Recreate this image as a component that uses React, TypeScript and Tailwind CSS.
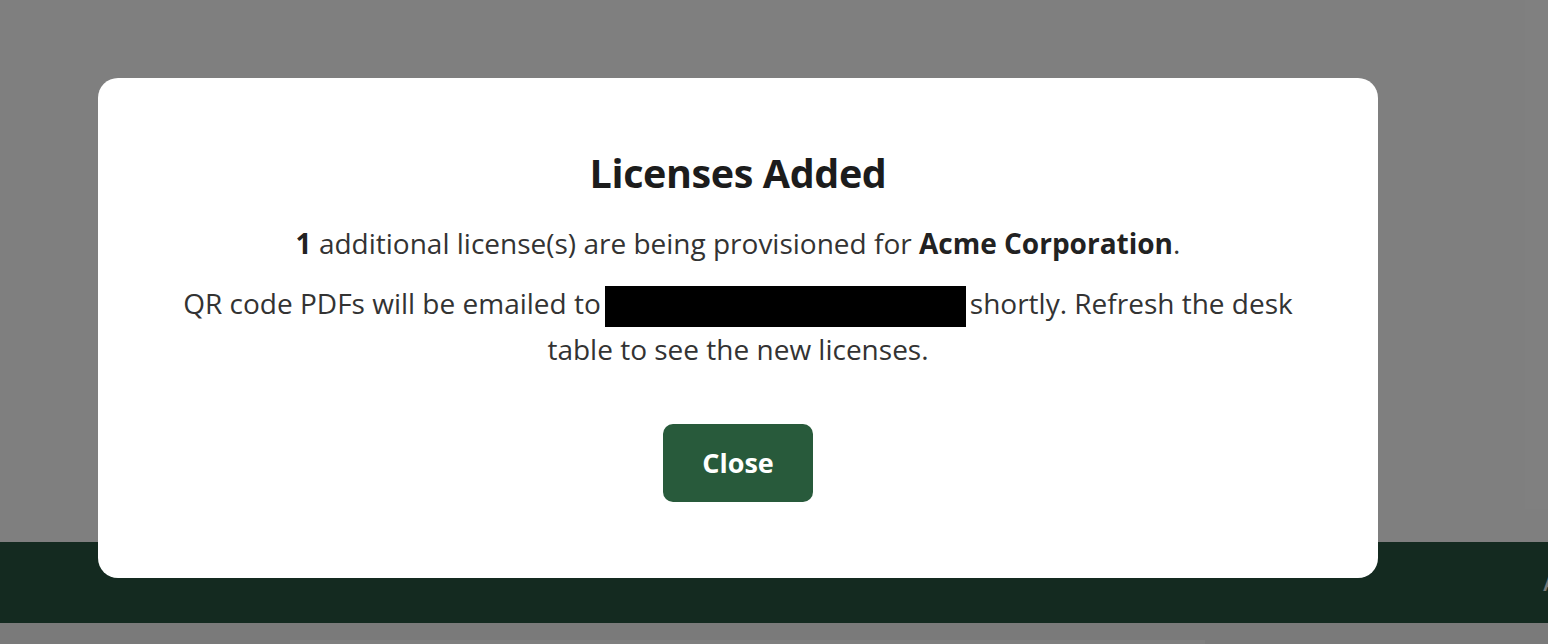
import React from "react";

export default function App() {
  return (
    <div
      className="relative w-full h-[644px] overflow-hidden"
      style={{ fontFamily: "'Open Sans', Lato, sans-serif" }}
    >
      {/* underlying page */}
      <div className="flex flex-col h-full">
        <div className="h-[542px] shrink-0 bg-white" />
        <div className="h-[81px] shrink-0 bg-[#285440] flex items-center justify-end overflow-hidden">
          <span className="text-[22px] font-semibold text-[#eef2ef] whitespace-nowrap translate-x-[92%]">
            Acme
          </span>
        </div>
        <div className="h-[60px] shrink-0 bg-[#f4f4f4] flex pl-[290px] pt-[17px]">
          <div className="w-[915px] h-[40px] bg-white flex gap-[160px] px-[8px] text-[15px] text-[#666] leading-[20px] pt-[1px]">
            <span>Desk</span>
            <span>Status</span>
          </div>
        </div>
      </div>

      {/* overlay */}
      <div className="absolute inset-0 bg-black/50 flex items-start pl-[98px] pt-[78px]">
        <div className="w-[1280px] h-[500px] bg-white rounded-[20px] flex flex-col items-center pt-[71px] text-center">
          <h2 className="text-[39.5px] leading-[48px] font-bold text-[#1c1c1c] tracking-[-0.01em]">
            Licenses Added
          </h2>
          <p className="mt-[24px] text-[28px] leading-[45px] text-[#333]">
            <span className="font-bold text-[#222]">1</span> additional license(s) are being provisioned for{" "}
            <span className="font-bold text-[#222]">Acme Corporation</span>.
          </p>
          <p className="mt-[15px] text-[28px] leading-[45px] text-[#333]">
            QR code PDFs will be emailed to
            <span className="inline-block align-middle w-[361px] h-[41px] bg-black mx-[4px]" />
            shortly. Refresh the desk
            <br />
            table to see the new licenses.
          </p>
          <button className="mt-[52px] w-[150px] h-[78px] rounded-[10px] bg-[#285a3b] text-white text-[27px] font-bold">
            Close
          </button>
        </div>
      </div>
    </div>
  );
}
